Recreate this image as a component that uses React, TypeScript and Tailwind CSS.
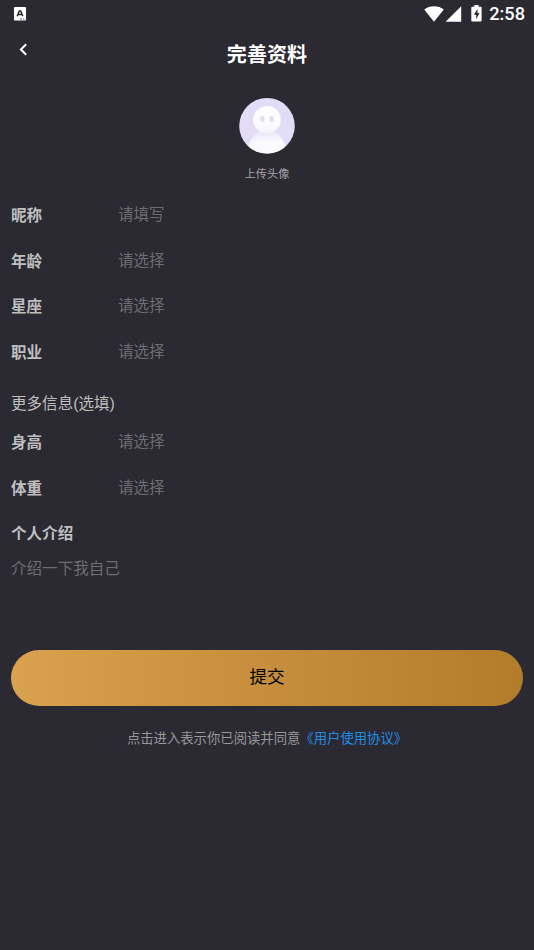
type FieldProps = {
  label: string;
  placeholder: string;
};

const basicFields: FieldProps[] = [
  { label: '昵称', placeholder: '请填写' },
  { label: '年龄', placeholder: '请选择' },
  { label: '星座', placeholder: '请选择' },
  { label: '职业', placeholder: '请选择' },
];

const moreFields: FieldProps[] = [
  { label: '身高', placeholder: '请选择' },
  { label: '体重', placeholder: '请选择' },
];

function StatusBar() {
  return (
    <div className="flex h-[27px] items-center justify-between pl-[14px] pr-[9px] text-white">
      <svg width="12" height="14" viewBox="0 0 12 14" fill="none">
        <rect width="12" height="13.5" rx="0.8" fill="#fff" />
        <path d="M3.2 9.3 5.3 4h1.4l2.1 5.3M4.2 7.6h3.6" stroke="#2b2931" strokeWidth="1.5" />
        <path d="M6 12h2M9 12h1.5" stroke="#2b2931" strokeWidth="0.8" />
      </svg>
      <div className="flex items-center">
        <svg width="20" height="16" viewBox="0 0 20 16" fill="#fff">
          <path d="M10 15.7 0.2 3.6C2.8 1.5 6.2.3 10 .3s7.2 1.2 9.8 3.3Z" />
        </svg>
        <svg className="ml-[1px]" width="17" height="16" viewBox="0 0 17 16" fill="#fff">
          <path d="M16.2.2v15.5H.6Z" />
        </svg>
        <svg className="ml-[9px]" width="11" height="17" viewBox="0 0 11 17">
          <path d="M3.3 0h4.3v1.7h2.1q.9 0 .9.9v13q0 .9-.9.9H1.2q-.9 0-.9-.9v-13q0-.9.9-.9h2.1Z" fill="#fff" />
          <path d="M6.5 4 2.9 9.8h2.3v4.4L8.5 8.1H6.5Z" fill="#2b2931" />
        </svg>
        <span className="ml-[7.5px] font-['Roboto',sans-serif] text-[18.2px] leading-[27px] font-medium">2:58</span>
      </div>
    </div>
  );
}

function Avatar() {
  return (
    <svg width="56" height="56" viewBox="0 0 56 56">
      <defs>
        <clipPath id="avatar-clip">
          <circle cx="28" cy="27.8" r="27.8" />
        </clipPath>
        <linearGradient id="head" x1="0" y1="0" x2="0" y2="1">
          <stop offset="0.6" stopColor="#fdfdfe" />
          <stop offset="1" stopColor="#f5f3fc" />
        </linearGradient>
        <linearGradient id="body" x1="0" y1="0" x2="0" y2="1">
          <stop offset="0" stopColor="#e6e1f8" />
          <stop offset="0.15" stopColor="#f1eefb" />
          <stop offset="0.32" stopColor="#fbfbfd" />
        </linearGradient>
      </defs>
      <g clipPath="url(#avatar-clip)">
        <rect width="56" height="56" fill="#e2dcf7" />
        <ellipse cx="28" cy="53" rx="19" ry="21" fill="url(#body)" />
        <circle cx="28" cy="21.7" r="13.8" fill="url(#head)" />
        <ellipse cx="23.4" cy="21" rx="2.2" ry="3" fill="#e2dcf7" />
        <ellipse cx="32.8" cy="21" rx="2.2" ry="3" fill="#e2dcf7" />
      </g>
    </svg>
  );
}

function Field({ label, placeholder }: FieldProps) {
  return (
    <div className="flex h-[45.7px] items-center">
      <label className="w-[107px] font-bold text-[#bfbfc0]">{label}</label>
      <span className="pb-[2px] text-[#6e6d70]">{placeholder}</span>
    </div>
  );
}

export default function App() {
  return (
    <div className="flex h-[950px] w-[534px] flex-col overflow-hidden bg-[#2b2931] font-['Roboto','Noto_Sans_CJK_SC',sans-serif] text-[15.56px] leading-6">
      <StatusBar />

      {/* Header */}
      <header className="grid h-[53px] grid-cols-[40px_1fr_40px] items-center text-white">
        <button className="mb-[9px] ml-[19px]" aria-label="返回">
          <svg width="9" height="13" viewBox="0 0 9 13" fill="none" stroke="#fff" strokeWidth="2">
            <path d="M7.2 1.2 1.9 6.5l5.3 5.3" />
          </svg>
        </button>
        <h1 className="pt-[2px] text-center text-[20.1px] font-bold">完善资料</h1>
      </header>

      {/* Avatar */}
      <div className="flex flex-col items-center pt-[18px]">
        <Avatar />
        <span className="mt-[9px] text-[11.2px] text-[#a5a4a7]">上传头像</span>
      </div>

      {/* Profile form */}
      <main className="flex flex-col px-[11px] pt-[6px]">
        {basicFields.map((field) => (
          <Field key={field.label} {...field} />
        ))}
        <h2 className="mt-[16.6px] mb-[4px] text-[#bfbfc0]">更多信息(选填)</h2>
        {moreFields.map((field) => (
          <Field key={field.label} {...field} />
        ))}
        <h2 className="mt-[10.6px] font-bold text-[#bfbfc0]">个人介绍</h2>
        <p className="mt-[11px] text-[#6e6d70]">介绍一下我自己</p>
        <button className="mt-[68.2px] h-14 rounded-full bg-linear-to-r from-[#daa14e] to-[#b37c2a] pb-[1px] text-[17.6px] text-black">
          提交
        </button>
        <p className="mt-[21.6px] text-center text-[13.35px] text-[#98979a]">
          点击进入表示你已阅读并同意<a className="text-[#218de6]">《用户使用协议》</a>
        </p>
      </main>
    </div>
  );
}
